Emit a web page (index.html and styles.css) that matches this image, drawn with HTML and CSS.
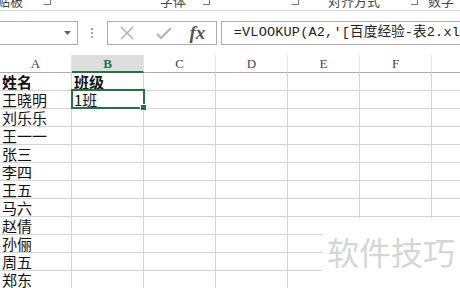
FILE: index.html
```html
<!DOCTYPE html>
<html lang="zh-CN">
<head>
    <meta charset="UTF-8">
    <title>VLOOKUP - 班级</title>
    <link rel="stylesheet" href="styles.css">
</head>
<body>
    <!-- Ribbon group labels (cut off at top) -->
    <div class="ribbon-labels">
        <span class="group-label lbl-clip">剪贴板</span>
        <span class="launcher l1"></span>
        <span class="group-label lbl-font">字体</span>
        <span class="launcher l2"></span>
        <span class="launcher l3"></span>
        <span class="group-label lbl-align">对齐方式</span>
        <span class="launcher l4"></span>
        <span class="group-label lbl-num">数字</span>
    </div>

    <!-- Formula bar -->
    <div class="formula-row">
        <div class="name-box">
            <svg class="drop" width="7" height="4" viewBox="0 0 7 4"><path d="M0 0h7L3.5 4z" fill="#666"/></svg>
        </div>
        <div class="grip">
            <span></span><span></span><span></span>
        </div>
        <div class="fx-box">
            <svg class="fx-icon" width="16" height="14" viewBox="0 0 16 14"><path d="M2 1l12 12M14 1L2 13" stroke="#b4b4b4" stroke-width="1.6" fill="none"/></svg>
            <svg class="fx-icon" width="18" height="14" viewBox="0 0 18 14"><path d="M2 8l4 4L16 2" stroke="#b4b4b4" stroke-width="2.2" fill="none"/></svg>
            <span class="fx-text">fx</span>
        </div>
        <div class="formula-input">=VLOOKUP(A2,'[百度经验-表2.xl</div>
    </div>

    <!-- Sheet grid -->
    <div class="sheet">
        <div class="grid">
            <div class="col-head">A</div>
            <div class="col-head active">B</div>
            <div class="col-head">C</div>
            <div class="col-head">D</div>
            <div class="col-head">E</div>
            <div class="col-head">F</div>
            <div class="col-head"></div>

            <div class="cell bold">姓名</div><div class="cell bold">班级</div><div class="cell"></div><div class="cell"></div><div class="cell"></div><div class="cell"></div><div class="cell"></div>
            <div class="cell">王晓明</div><div class="cell selected">1班</div><div class="cell"></div><div class="cell"></div><div class="cell"></div><div class="cell"></div><div class="cell"></div>
            <div class="cell">刘乐乐</div><div class="cell"></div><div class="cell"></div><div class="cell"></div><div class="cell"></div><div class="cell"></div><div class="cell"></div>
            <div class="cell">王一一</div><div class="cell"></div><div class="cell"></div><div class="cell"></div><div class="cell"></div><div class="cell"></div><div class="cell"></div>
            <div class="cell">张三</div><div class="cell"></div><div class="cell"></div><div class="cell"></div><div class="cell"></div><div class="cell"></div><div class="cell"></div>
            <div class="cell">李四</div><div class="cell"></div><div class="cell"></div><div class="cell"></div><div class="cell"></div><div class="cell"></div><div class="cell"></div>
            <div class="cell">王五</div><div class="cell"></div><div class="cell"></div><div class="cell"></div><div class="cell"></div><div class="cell"></div><div class="cell"></div>
            <div class="cell">马六</div><div class="cell"></div><div class="cell"></div><div class="cell"></div><div class="cell"></div><div class="cell"></div><div class="cell"></div>
            <div class="cell">赵倩</div><div class="cell"></div><div class="cell"></div><div class="cell"></div><div class="cell"></div><div class="cell"></div><div class="cell"></div>
            <div class="cell">孙俪</div><div class="cell"></div><div class="cell"></div><div class="cell"></div><div class="cell"></div><div class="cell"></div><div class="cell"></div>
            <div class="cell">周五</div><div class="cell"></div><div class="cell"></div><div class="cell"></div><div class="cell"></div><div class="cell"></div><div class="cell"></div>
            <div class="cell">郑东</div><div class="cell"></div><div class="cell"></div><div class="cell"></div><div class="cell"></div><div class="cell"></div><div class="cell"></div>
        </div>

        <!-- Watermark -->
        <div class="watermark">软件技巧</div>
    </div>
</body>
</html>
```

FILE: styles.css
```css
* {
    margin: 0;
    padding: 0;
    box-sizing: border-box;
}

:root {
    --grid-line: #d4d4d4;
    --box-line: #ababab;
    --excel-green: #217346;
    --text-dark: #111111;
    --text-muted: #444444;
}

body {
    width: 460px;
    height: 288px;
    overflow: hidden;
    background-color: #ffffff;
    color: var(--text-dark);
    font-family: "Noto Sans CJK SC", sans-serif;
}

/* Ribbon labels */
.ribbon-labels {
    height: 11px;
    border-bottom: 1px solid var(--grid-line);
    position: relative;
    overflow: hidden;
}

.group-label {
    position: absolute;
    top: -7px;
    font-size: 13px;
    line-height: 15px;
    color: var(--text-muted);
}

.lbl-clip { left: -16px; }
.lbl-font { left: 160px; }
.lbl-align { left: 328px; }
.lbl-num { left: 428px; }

.launcher {
    position: absolute;
    top: 0;
    width: 7px;
    height: 5px;
    border-right: 1px solid #777;
    border-bottom: 1px solid #777;
}

.l1 { left: 44px; }
.l2 { left: 203px; }
.l3 { left: 292px; }
.l4 { left: 411px; }

/* Formula bar */
.formula-row {
    display: flex;
    height: 24px;
    margin-top: 10px;
}

.name-box {
    width: 78px;
    border: 1px solid var(--box-line);
    border-left: none;
    display: flex;
    align-items: center;
    justify-content: flex-end;
    padding-right: 6px;
}

.grip {
    width: 30px;
    display: flex;
    flex-direction: column;
    align-items: center;
    justify-content: center;
    gap: 2px;
}

.grip span {
    width: 2px;
    height: 2px;
    background-color: #a8a8a8;
}

.fx-box {
    width: 110px;
    border: 1px solid var(--box-line);
    display: flex;
    align-items: center;
    padding-left: 11px;
    gap: 20px;
}

.fx-text {
    font-family: "Liberation Serif", serif;
    font-style: italic;
    font-weight: bold;
    font-size: 19px;
    color: #555;
    margin-left: -4px;
}

.formula-input {
    flex: 1;
    margin-left: 4px;
    border: 1px solid var(--box-line);
    border-right: none;
    padding-left: 12px;
    font-family: "Liberation Mono", "Noto Sans CJK SC", monospace;
    font-size: 13.5px;
    letter-spacing: 0.2px;
    line-height: 22px;
    white-space: nowrap;
    color: #222;
}

/* Sheet */
.sheet {
    margin-top: 10px;
    position: relative;
    overflow: hidden;
    height: 233px;
}

.grid {
    display: grid;
    grid-template-columns: repeat(7, 72px);
    grid-auto-rows: 18px;
}

.col-head {
    border-right: 1px solid #e2e2e2;
    border-bottom: 1px solid var(--box-line);
    font-family: "Liberation Serif", serif;
    font-size: 13px;
    line-height: 17px;
    text-align: center;
    color: var(--text-muted);
}

.col-head.active {
    background-color: #dddddd;
    color: var(--excel-green);
    font-weight: bold;
    border-bottom: 2px solid var(--excel-green);
}

.cell {
    border-right: 1px solid var(--grid-line);
    border-bottom: 1px solid var(--grid-line);
    font-size: 15px;
    line-height: 17px;
    padding-left: 2px;
    white-space: nowrap;
}

.cell.bold {
    font-weight: bold;
}

.cell.selected {
    position: relative;
}

.cell.selected::after {
    content: "";
    position: absolute;
    top: -2px;
    left: -1px;
    right: -2px;
    bottom: -1px;
    border: 2px solid var(--excel-green);
}

.cell.selected::before {
    content: "";
    position: absolute;
    right: -4px;
    bottom: -3px;
    width: 5px;
    height: 5px;
    background-color: var(--excel-green);
    border: 1px solid #ffffff;
    z-index: 1;
}

.watermark {
    position: absolute;
    left: 322px;
    top: 163px;
    right: 0;
    bottom: 0;
    background-color: #ffffff;
    color: #d6d6d6;
    font-size: 32px;
    line-height: 1;
    padding: 17px 0 0 5px;
    white-space: nowrap;
}
```
